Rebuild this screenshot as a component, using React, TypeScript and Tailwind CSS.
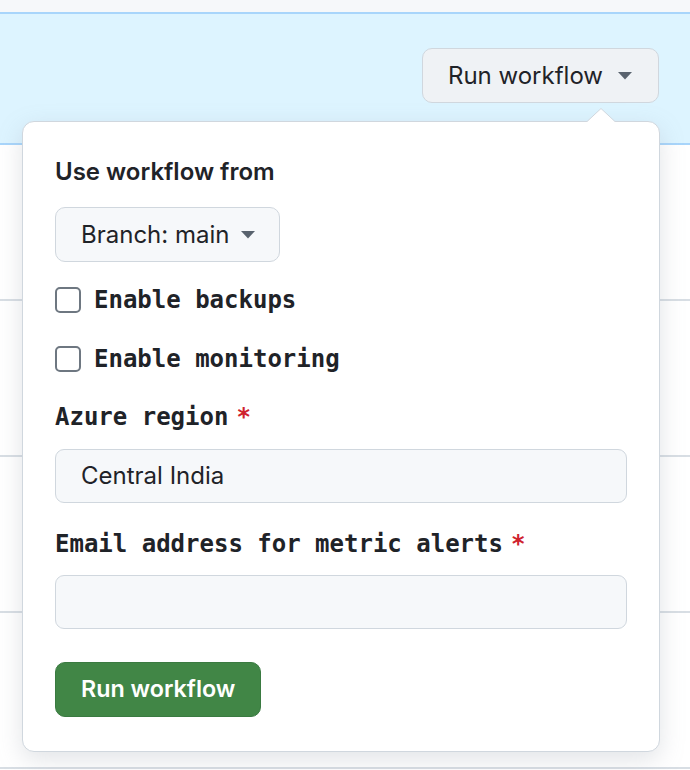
import React from "react";

const sans = "font-['Inter','Noto_Sans',sans-serif]";
const mono = "font-['DejaVu_Sans_Mono','Liberation_Mono',monospace]";

function Caret({ className = "" }: { className?: string }) {
	return (
		<svg width="14" height="8" viewBox="0 0 14 8" className={className}>
			<path d="M0 0 L14 0 L7 7.5 Z" fill="#59636e" />
		</svg>
	);
}

function CheckboxRow({ label }: { label: string }) {
	return (
		<label className="flex h-8 items-center gap-[13px]">
			<span className="h-[26px] w-[26px] shrink-0 rounded-[5px] border-2 border-[#6e7781] bg-white" />
			<span className={`${mono} text-[24px] font-bold text-[#1f2328]`}>
				{label}
			</span>
		</label>
	);
}

function FieldLabel({ label }: { label: string }) {
	return (
		<div className="flex h-8 items-center gap-2">
			<span className={`${mono} text-[24px] font-bold text-[#1f2328]`}>
				{label}
			</span>
			<span className={`${mono} text-[24px] font-bold text-[#cf222e]`}>*</span>
		</div>
	);
}

function TextField({ value }: { value: string }) {
	return (
		<div
			className={`flex h-[54px] items-center rounded-[9px] border border-[#d0d7de] bg-[#f6f8fa] px-[25px] text-[24px] text-[#1f2328] ${sans}`}
		>
			{value}
		</div>
	);
}

export default function App() {
	return (
		<div className={`relative h-[770px] w-[690px] overflow-hidden bg-white ${sans}`}>
			<div className="h-3 bg-[#f6f8fa]" />
			<div className="flex h-[133px] items-center justify-end border-y-2 border-[#a8d5fb] bg-[#ddf4ff] pr-[31px]">
				<button className="mb-[6px] flex h-[55px] items-center gap-[15px] rounded-[10px] border border-[#d0d7de] bg-[#eff2f5] pl-[25px] pr-[26px] text-[24px] text-[#1f2328]">
					Run workflow
					<Caret />
				</button>
			</div>
			<div className="h-[156px] border-b-2 border-[#d8dee4]" />
			<div className="h-[156px] border-b-2 border-[#d8dee4]" />
			<div className="h-[156px] border-b-2 border-[#d8dee4]" />
			<div className="h-[156px] border-b-2 border-[#d8dee4]" />

			<div className="absolute left-[22px] top-[121px] w-[638px] rounded-[12px] border border-[#d0d7de] bg-white px-[32px] pb-[34px] pt-[34px] shadow-[0_8px_24px_rgba(140,149,159,0.25)]">
				<svg
					width="30"
					height="15"
					viewBox="0 0 30 15"
					className="absolute right-[43px] top-[-14px]"
				>
					<path d="M0 14.5 L15 0.5 L30 14.5" fill="white" stroke="#d0d7de" />
					<rect x="0" y="14" width="30" height="2" fill="white" />
				</svg>
				<div className="flex h-8 items-center text-[24px] font-semibold text-[#1f2328]">
					Use workflow from
				</div>
				<button className="mt-[19px] flex h-[55px] items-center gap-[12px] rounded-[10px] border border-[#d0d7de] bg-[#f6f8fa] pl-[25px] pr-[24px] text-[24px] text-[#1f2328]">
					Branch: main
					<Caret />
				</button>
				<div className="mt-[22px]">
					<CheckboxRow label="Enable backups" />
				</div>
				<div className="mt-[27px]">
					<CheckboxRow label="Enable monitoring" />
				</div>
				<div className="mt-[26px]">
					<FieldLabel label="Azure region" />
				</div>
				<div className="mt-[16px]">
					<TextField value="Central India" />
				</div>
				<div className="mt-[25px]">
					<FieldLabel label="Email address for metric alerts" />
				</div>
				<div className="mt-[15px]">
					<TextField value="" />
				</div>
				<button className="mt-[33px] flex h-[55px] items-center rounded-[10px] border border-[#3a7a41] bg-[#418646] px-[25px] text-[23.3px] font-semibold text-white">
					Run workflow
				</button>
			</div>
		</div>
	);
}
